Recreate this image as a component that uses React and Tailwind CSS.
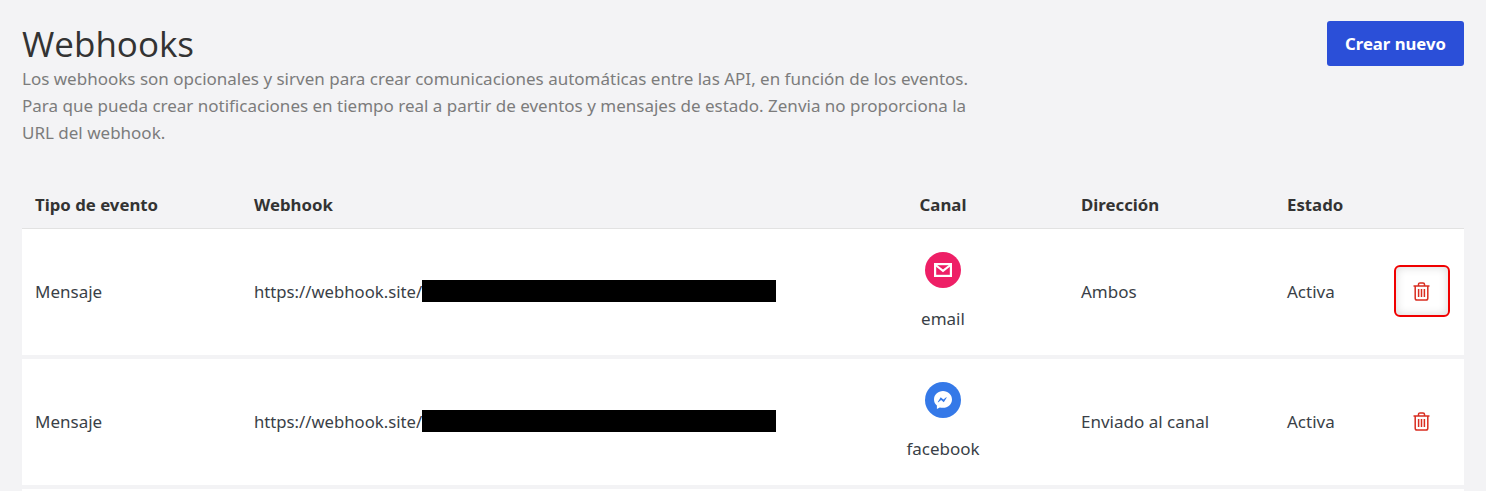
import React from 'react';

const columns = 'grid grid-cols-[219px_577px_250px_206px_106px_84px] items-center';

const rows = [
  { tipo: 'Mensaje', canal: 'email', direccion: 'Ambos', estado: 'Activa', focused: true },
  { tipo: 'Mensaje', canal: 'facebook', direccion: 'Enviado al canal', estado: 'Activa', focused: false },
];

const MailIcon = () => (
  <svg width="18" height="14" viewBox="0 0 18 14" fill="none" stroke="#fff" strokeWidth="2.2">
    <rect x="1.1" y="1.1" width="15.8" height="11.8" />
    <path d="M1.5 2 L9 7.8 L16.5 2" />
  </svg>
);

const MessengerIcon = () => (
  <svg width="20" height="20" viewBox="0 0 20 20">
    <path
      fill="#fff"
      d="M10 1C5 1 1 4.7 1 9.4c0 2.5 1.1 4.6 2.9 6.1V19l2.9-1.6c1 .3 2.1.4 3.2.4 5 0 9-3.7 9-8.4S15 1 10 1z"
    />
    <path fill="#3579e8" d="M4.8 11.9l2.9-4.6 2.7 2.1 2.8-2.1c.3-.2.6.1.4.4l-2.8 4.5-2.7-2.1-2.8 2.2c-.3.2-.7-.1-.5-.4z" />
  </svg>
);

// trash can with three bars, the lucide one only has two
const TrashIcon = () => (
  <svg width="17" height="19" viewBox="0 0 17 19" fill="none" stroke="currentColor" strokeWidth="1.5">
    <path d="M0.5 4H16.5" />
    <path d="M5.5 4V2.4C5.5 1.5 6.2 0.9 7 0.9H10C10.8 0.9 11.5 1.5 11.5 2.4V4" />
    <path d="M2.2 4V16.2C2.2 17.2 3 18 4 18H13C14 18 14.8 17.2 14.8 16.2V4" />
    <path d="M5.6 7V15M8.5 7V15M11.4 7V15" />
  </svg>
);

const Row = ({ row }) => (
  <div className={`${columns} h-[126px] bg-white mb-1 text-[#3a3f47]`}>
    <div className="pl-[13px]">{row.tipo}</div>
    <div className="pl-[13px] flex items-center text-[16.7px]">
      https://webhook.site/
      <span className="inline-block w-[354px] h-[22px] mb-[2px] bg-black"></span>
    </div>
    <div className="flex flex-col items-center gap-[18px]">
      <div
        className={`w-9 h-9 rounded-full flex items-center justify-center ${
          row.canal === 'email' ? 'bg-[#ee1f66]' : 'bg-[#3579e8]'
        }`}
      >
        {row.canal === 'email' ? <MailIcon /> : <MessengerIcon />}
      </div>
      <span>{row.canal}</span>
    </div>
    <div className="pl-[13px]">{row.direccion}</div>
    <div className="pl-[13px]">{row.estado}</div>
    <div className="flex justify-center">
      <button
        className={`w-[56px] h-[52px] mb-[2px] rounded-md flex items-center justify-center pr-[2px] text-[#d92d20] ${
          row.focused ? 'border-2 border-[#f00000] shadow-[inset_0_0_10px_rgba(0,0,0,0.16)]' : ''
        }`}
      >
        <TrashIcon />
      </button>
    </div>
  </div>
);

export default function App() {
  return (
    <div className="h-[491px] overflow-hidden bg-[#f3f3f5] px-[22px] pt-[21px] font-['Noto_Sans',sans-serif] text-[17px]">
      <div className="flex justify-between items-start">
        <div className="w-[965px]">
          <h1 className="font-['Open_Sans',sans-serif] font-medium text-[35px] leading-[46px] -mb-[2px] text-[#333]">
            Webhooks
          </h1>
          <p className="text-[#7c7c7c] leading-[27px]">
            Los webhooks son opcionales y sirven para crear comunicaciones automáticas entre las API, en función de los
            eventos. Para que pueda crear notificaciones en tiempo real a partir de eventos y mensajes de estado. Zenvia
            no proporciona la URL del webhook.
          </p>
        </div>
        <button className="w-[137px] h-[45px] rounded-[3px] bg-[#2b4fd8] text-white font-bold text-[16.7px]">
          Crear nuevo
        </button>
      </div>

      <div className={`${columns} h-[47px] mt-[36px] border-b border-[#e2e2e2] font-bold text-[16.8px] text-[#333]`}>
        <div className="pl-[13px]">Tipo de evento</div>
        <div className="pl-[13px]">Webhook</div>
        <div className="text-center">Canal</div>
        <div className="pl-[13px]">Dirección</div>
        <div className="pl-[13px]">Estado</div>
        <div></div>
      </div>

      {rows.map((row) => (
        <Row key={row.canal} row={row} />
      ))}
      <div className="h-[40px] bg-white"></div>
    </div>
  );
}
